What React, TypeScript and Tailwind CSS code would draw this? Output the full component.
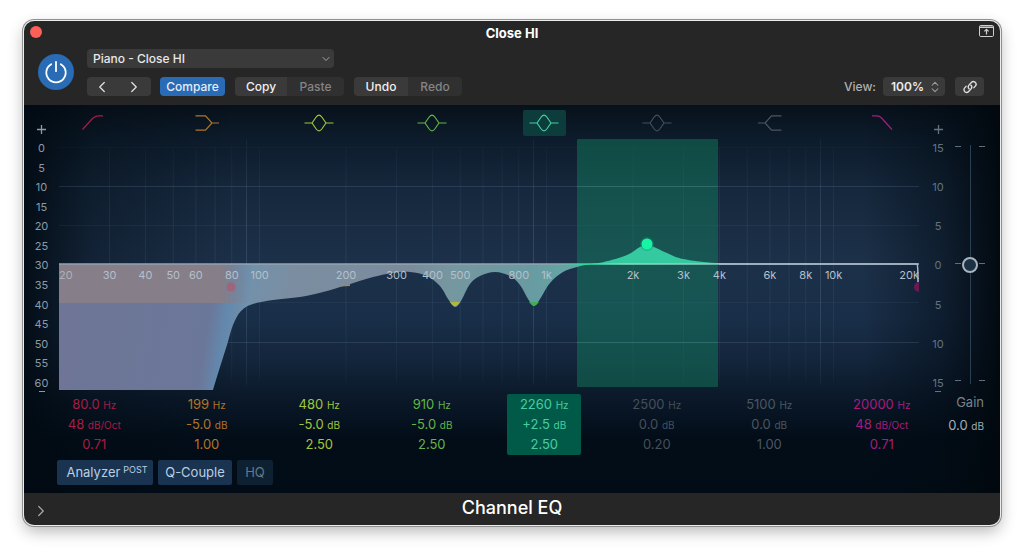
import { useState } from 'react'
import { ChevronDown, ChevronLeft, ChevronRight, ChevronsUpDown } from 'lucide-react'

type Shape = 'lowCut' | 'lowShelf' | 'bell' | 'highShelf' | 'highCut'

const shapes: Record<Shape, string> = {
  lowCut: 'M3.5 15.5 13.5 4.5Q16.5 1.8 19 1.8H24',
  lowShelf: 'M3.5 1.8H13.5L20 9 13.5 16.2H3.5M20 9H27',
  bell: 'M.5 9H8L12.2 3Q15 -.6 17.8 3L22 9H29.5M8 9 12.2 15Q15 18.6 17.8 15L22 9',
  highShelf: 'M27.5 1.8H17.5L11 9 17.5 16.2H27.5M11 9H4',
  highCut: 'M5 1.8H10Q12.5 1.8 14.5 4L25 15.5',
}

const bands = [
  { name: 'Low Cut', shape: 'lowCut', freq: '80.0', gain: '48', unit: 'dB/Oct', q: '0.71', color: 'text-[#a81c44]' },
  { name: 'Low Shelf', shape: 'lowShelf', freq: '199', gain: '-5.0', unit: 'dB', q: '1.00', color: 'text-[#b0752a]' },
  { name: 'Peak 1', shape: 'bell', freq: '480', gain: '-5.0', unit: 'dB', q: '2.50', color: 'text-[#a3c639]' },
  { name: 'Peak 2', shape: 'bell', freq: '910', gain: '-5.0', unit: 'dB', q: '2.50', color: 'text-[#63b548]' },
  { name: 'Peak 3', shape: 'bell', freq: '2260', gain: '+2.5', unit: 'dB', q: '2.50', color: 'text-[#45cf9f]' },
  { name: 'Peak 4', shape: 'bell', freq: '2500', gain: '0.0', unit: 'dB', q: '0.20', color: 'text-[#444f5c]' },
  { name: 'High Shelf', shape: 'highShelf', freq: '5100', gain: '0.0', unit: 'dB', q: '1.00', color: 'text-[#4b5661]' },
  { name: 'High Cut', shape: 'highCut', freq: '20000', gain: '48', unit: 'dB/Oct', q: '0.71', color: 'text-[#a51c7f]' },
] as const

const leftScale = [0, 5, 10, 15, 20, 25, 30, 35, 40, 45, 50, 55, 60]
const rightScale = [15, 10, 5, 0, 5, 10, 15]

const gridFreqs = [30, 40, 50, 60, 70, 80, 100, 200, 300, 400, 500, 600, 700, 800, 1000, 2000, 3000, 4000, 5000, 6000, 7000, 8000, 10000]
const decadeFreqs = [90, 900, 9000]
const labels = [
  [30, '30'], [40, '40'], [50, '50'], [60, '60'], [80, '80'], [100, '100'], [200, '200'], [300, '300'],
  [400, '400'], [500, '500'], [800, '800'], [1000, '1k'], [2000, '2k'], [3000, '3k'], [4000, '4k'],
  [6000, '6k'], [8000, '8k'], [10000, '10k'],
] as const

const curve = [
  [154, 251], [161, 228], [168, 206], [174, 186], [182, 172], [194, 165], [214, 161], [241, 158], [264, 153],
  [288, 146], [314, 138], [334, 134], [351, 133], [368, 137], [381, 147], [389, 160], [396, 168], [402, 162],
  [411, 145], [421, 137], [436, 133], [451, 137], [461, 146], [469, 160], [475, 167], [481, 160], [491, 144],
  [504, 133], [518, 128], [532, 125], [545, 123], [568, 116], [581, 108], [588, 106], [595, 108], [608, 114],
  [624, 120], [658, 124], [720, 125], [858, 125],
]

const freqX = (f: number) => Math.log10(f / 20) * 287

// Catmull-Rom spline through the points
function smooth(pts: number[][]) {
  let d = `${pts[0][0]} ${pts[0][1]}`
  for (let i = 0; i < pts.length - 1; i++) {
    const a = pts[i - 1] ?? pts[i]
    const b = pts[i]
    const c = pts[i + 1]
    const e = pts[i + 2] ?? c
    d += `C${b[0] + (c[0] - a[0]) / 6} ${b[1] + (c[1] - a[1]) / 6} ${c[0] - (e[0] - b[0]) / 6} ${c[1] - (e[1] - b[1]) / 6} ${c[0]} ${c[1]}`
  }
  return d
}

const segment = 'h-[19px] flex items-center justify-center'
const unit = 'text-[10px] leading-none'

function Header() {
  return (
    <header className="bg-[#262626] pb-[9px]">
      <div className="relative flex h-7 items-start justify-between px-1.5 pt-1">
        <button aria-label="Close" className="mt-px h-3 w-3 rounded-full bg-[#fe5f57]" />
        <h1 className="absolute inset-x-8 top-1 text-center text-[13px] leading-4 font-bold text-white">Close HI</h1>
        <button aria-label="Expand window" className="text-[#cfcfcf]">
          <svg width="15" height="12" viewBox="0 0 15 12" fill="none" stroke="currentColor">
            <rect x=".5" y=".5" width="14" height="11" rx="1.2" />
            <path d="M.5 2.2h14" strokeWidth="1.4" />
            <path d="M7.5 9.5v-5M5.4 6.4l2.1-2.1 2.1 2.1" strokeWidth="1.2" />
          </svg>
        </button>
      </div>

      <div className="flex items-end pr-4 pl-3.5">
        <button aria-label="Power" className="mb-1.5 flex h-9 w-9 items-center justify-center rounded-full bg-[#2a6bb5] text-white">
          <svg width="24" height="24" viewBox="0 0 24 24" fill="none" stroke="currentColor" strokeWidth="1.8" strokeLinecap="round">
            <path d="M12 1.8v9.4" />
            <path d="M7.2 4.2a9.7 9.7 0 1 0 9.6 0" />
          </svg>
        </button>

        <div className="ml-[13px] flex flex-col gap-[9px]">
          <div className="relative w-[247px]">
            <select aria-label="Preset" className="block h-[19px] w-full appearance-none rounded bg-[#3a3a3a] pr-6 pl-1.5 text-xs font-medium text-[#e8e8e8]">
              <option>Piano - Close HI</option>
            </select>
            <ChevronDown className="pointer-events-none absolute top-1 right-0.5 h-3 w-3 text-[#a5a5a5]" />
          </div>

          <div className="flex text-xs font-medium">
            <div className="flex w-16 overflow-hidden rounded bg-[#3a3a3a] text-[#e0e0e0]">
              <button aria-label="Previous preset" className={`${segment} w-[30px]`}>
                <ChevronLeft className="h-[18px] w-[18px]" strokeWidth={1.7} />
              </button>
              <button aria-label="Next preset" className={`${segment} flex-1`}>
                <ChevronRight className="h-[18px] w-[18px]" strokeWidth={1.7} />
              </button>
            </div>
            <button className={`${segment} ml-[9px] w-[65px] rounded bg-[#2a6bb5] text-[#e6eef8]`}>Compare</button>
            <div className="ml-2.5 flex overflow-hidden rounded">
              <button className={`${segment} w-[52px] bg-[#3a3a3a] text-[#f0f0f0]`}>Copy</button>
              <button className={`${segment} w-[57px] bg-[#303030] text-[#858585]`}>Paste</button>
            </div>
            <div className="ml-2.5 flex overflow-hidden rounded">
              <button className={`${segment} w-[54px] bg-[#3a3a3a] text-[#f0f0f0]`}>Undo</button>
              <button className={`${segment} w-[54px] bg-[#303030] text-[#858585]`}>Redo</button>
            </div>
          </div>
        </div>

        <div className="ml-auto flex items-center text-xs">
          <label htmlFor="view" className="mr-[7px] font-medium text-[#b0b0b0]">View:</label>
          <div className="relative">
            <select id="view" className="block h-[19px] w-[62px] appearance-none rounded bg-[#3a3a3a] pl-2 text-xs font-semibold text-[#ececec]">
              <option>100%</option>
            </select>
            <ChevronsUpDown className="pointer-events-none absolute top-[3px] right-[3px] h-3.5 w-3.5 text-[#a0a0a0]" strokeWidth={1.8} />
          </div>
          <button aria-label="Link" className={`${segment} ml-2.5 w-[29px] rounded bg-[#3a3a3a] text-[#dcdcdc]`}>
            <svg width="14" height="14" viewBox="0 0 24 24" fill="none" stroke="currentColor" strokeWidth="2.4" strokeLinecap="round">
              <path d="M10.5 15.2a4.6 4.6 0 0 1-.6-6l4.4-4.9a4.6 4.6 0 0 1 6.8 6.2l-2.4 2.6" />
              <path d="M13.5 8.8a4.6 4.6 0 0 1 .6 6l-4.4 4.9a4.6 4.6 0 0 1-6.8-6.2l2.4-2.6" />
            </svg>
          </button>
        </div>
      </div>
    </header>
  )
}

function Scale({ values, className }: { values: number[]; className: string }) {
  return (
    <div className={`-mt-[19px] -mb-0.5 flex shrink-0 flex-col items-center text-[11px] leading-[19px] ${className}`}>
      <svg width="9" height="19" viewBox="0 0 9 19" stroke="currentColor" strokeWidth="1.3">
        <path d="M0 9.5h9M4.5 5v9" />
      </svg>
      <div className="flex flex-1 flex-col items-center justify-between">
        {values.map((v, i) => (
          <span key={i}>{v}</span>
        ))}
      </div>
      <span className="-mt-0.5 h-px w-1.5 bg-current" />
    </div>
  )
}

function Plot() {
  const line = smooth(curve)
  return (
    <svg viewBox="0 0 860 251" className="h-auto min-w-0 flex-1" role="img" aria-label="Equalizer curve">
      <defs>
        <linearGradient id="area" gradientUnits="userSpaceOnUse" x1="0" y1="0" x2="860" y2="0" gradientTransform="skewX(-8.5)">
          <stop offset="0" stopColor="#6f7596" />
          <stop offset=".205" stopColor="#6b7799" />
          <stop offset=".225" stopColor="#6388ad" />
          <stop offset=".25" stopColor="#7391aa" />
          <stop offset=".29" stopColor="#7a8ea1" />
          <stop offset=".43" stopColor="#7b8b9c" />
          <stop offset=".48" stopColor="#7597a0" />
          <stop offset=".57" stopColor="#699aa2" />
          <stop offset=".62" stopColor="#62a6a4" />
          <stop offset=".65" stopColor="#35c9a0" />
          <stop offset=".77" stopColor="#35c9a0" />
          <stop offset=".82" stopColor="#8fb9bb" />
        </linearGradient>
        <linearGradient id="cut" x1="0" x2="1">
          <stop offset=".85" stopColor="#867e88" />
          <stop offset="1" stopColor="#867e88" stopOpacity="0" />
        </linearGradient>
        <linearGradient id="stroke" gradientUnits="userSpaceOnUse" x1="0" y1="0" x2="860" y2="0">
          <stop offset=".58" stopColor="#93a3af" />
          <stop offset=".61" stopColor="#22e09a" />
          <stop offset=".66" stopColor="#7fe3c4" />
          <stop offset=".8" stopColor="#8fc4c2" />
          <stop offset="1" stopColor="#a3b2c0" />
        </linearGradient>
        <linearGradient id="fade" x1="0" y1="0" x2="0" y2="1">
          <stop offset="0" stopColor="#fff" stopOpacity=".3" />
          <stop offset=".3" stopColor="#fff" />
          <stop offset=".7" stopColor="#fff" />
          <stop offset="1" stopColor="#fff" stopOpacity=".3" />
        </linearGradient>
        <mask id="gridMask">
          <rect width="860" height="251" fill="url(#fade)" />
        </mask>
      </defs>

      <g mask="url(#gridMask)" fill="none">
        {gridFreqs.map(f => (
          <path key={f} d={`M${freqX(f)} 8V243`} stroke="#6f9bb5" strokeOpacity=".13" />
        ))}
        {decadeFreqs.map(f => (
          <path key={f} d={`M${freqX(f)} 0V246`} stroke="#7fa5bb" strokeOpacity=".22" />
        ))}
        <path d="M0 8.5H860M0 86.5H860M0 163.5H860" stroke="#7fa5bb" strokeOpacity=".08" />
        <path d="M0 47.5H860M0 203.5H860" stroke="#7fa5bb" strokeOpacity=".25" />
      </g>

      <rect x="518" y="0" width="141" height="248" rx="1" fill="#148260" fillOpacity=".46" />
      <path d="M518 47.5h141M518 203.5h141" stroke="#7fc5bb" strokeOpacity=".15" />

      <path d={`M0 125V251L${line}Z`} fill="url(#area)" />
      <rect y="125" width="190" height="39" fill="url(#cut)" />
      <path d="M391 163q5 8 10 0z" fill="#b3b83c" />
      <path d="M470 163q5 7 10 0z" fill="#3fae55" />
      <path d="M281 147.5l10-2.5v2z" fill="#b88a4a" />
      <path d="M0 125H860" stroke="url(#stroke)" strokeWidth="1.5" />
      <path d="M660 125H858Q859 126 859 143" fill="none" stroke="#a9b6c2" strokeWidth="1.6" />
      <circle cx="172" cy="148" r="4.5" fill="#c4475f" fillOpacity=".5" />
      <circle cx="860" cy="148" r="5" fill="#8e1560" fillOpacity=".7" />
      <circle cx="588" cy="105" r="7" fill="#0d9a6a" fillOpacity=".4" />
      <circle cx="588" cy="105" r="5.5" fill="#16f5a5" />

      <g className="text-[11px]" fill="#b4c0cc" textAnchor="middle">
        <text x="0" y="140" textAnchor="start" fillOpacity=".8">20</text>
        {labels.map(([f, t]) => (
          <text key={f} x={freqX(f)} y="140">{t}</text>
        ))}
        <text x="860" y="140" textAnchor="end">20k</text>
      </g>
    </svg>
  )
}

function GainSlider() {
  const [gain, setGain] = useState(0)
  return (
    <div className="relative flex w-[26px] shrink-0 justify-center pt-1 pb-1.5 text-[#5f6e7a]">
      <div className="flex flex-col justify-between py-[3px]">
        {[0, 1, 2].map(i => (
          <span key={i} className="flex w-[30px] justify-between">
            <span className="h-px w-1.5 bg-current" />
            <span className="h-px w-1.5 bg-current" />
          </span>
        ))}
      </div>
      <div className="absolute inset-y-1.5 left-1/2 w-px bg-[#2c3f50]" />
      <input
        id="gain"
        type="range"
        min={-15}
        max={15}
        step={0.5}
        value={gain}
        onChange={e => setGain(Number(e.target.value))}
        className="absolute inset-0 m-auto h-full w-4 appearance-none bg-transparent [direction:rtl] [writing-mode:vertical-lr] [&::-webkit-slider-thumb]:h-4 [&::-webkit-slider-thumb]:w-4 [&::-webkit-slider-thumb]:appearance-none [&::-webkit-slider-thumb]:rounded-full [&::-webkit-slider-thumb]:border-2 [&::-webkit-slider-thumb]:border-[#a7b3bd] [&::-webkit-slider-thumb]:bg-[#1c3144]"
      />
    </div>
  )
}

export default function App() {
  const [active, setActive] = useState(4)

  return (
    <main className="bg-white px-6 pt-[21px] pb-[29px] font-[Inter,sans-serif]">
      <div className="overflow-hidden rounded-[10px] shadow-[0_0_0_1px_#ececec,0_0_0_2px_#8f8f8f,0_6px_16px_rgba(0,0,0,0.3)]">
        <Header />

        <section className="bg-[linear-gradient(90deg,rgba(1,10,18,0.9),rgba(1,10,18,0.35)_7%,transparent_22%,transparent_86%,rgba(1,10,18,0.45)_94%,rgba(1,8,14,0.95)),linear-gradient(180deg,#07111b,#0d1c2c_9%,#16283d_22%,#1c3049_40%,#192e48_55%,#13253b_66%,#0b192a_75%,#020d18_86%,#010c16)]">
          <div className="grid grid-cols-8 justify-items-center pt-[5px] pr-[62px] pb-[3px] pl-3.5">
            {bands.map((b, i) => (
              <button
                key={b.name}
                aria-label={b.name}
                aria-pressed={i === active}
                onClick={() => setActive(i)}
                className={`flex h-[26px] w-[43px] items-center justify-center rounded-xs ${b.color} ${i === active ? 'bg-[#0c3d3c]' : ''}`}
              >
                <svg width="30" height="18" viewBox="0 0 30 18" fill="none" stroke="currentColor" strokeWidth="1.2">
                  <path d={shapes[b.shape]} />
                </svg>
              </button>
            ))}
          </div>

          <div className="flex pr-[17px]">
            <Scale values={leftScale} className="w-[35px] text-[#8e9ba6]" />
            <Plot />
            <Scale values={rightScale} className="w-[38px] text-[#637481]" />
            <GainSlider />
          </div>

          <div className="flex pt-1 pl-3.5">
            <div className="grid flex-1 grid-cols-8 justify-items-center">
              {bands.map((b, i) => (
                <div
                  key={b.name}
                  className={`flex w-[74px] flex-col items-center rounded-xs pb-px text-[13px] leading-5 whitespace-nowrap ${b.color} ${i === active ? 'bg-[#015a48]' : ''}`}
                >
                  <span>{b.freq} <small className={unit}>Hz</small></span>
                  <span>{b.gain} <small className={unit}>{b.unit}</small></span>
                  <span>{b.q}</span>
                </div>
              ))}
            </div>
            <div className="-mt-1 flex w-[62px] flex-col items-end pr-4 text-[13px] whitespace-nowrap">
              <label htmlFor="gain" className="leading-6 text-[#77838d]">Gain</label>
              <span className="leading-[22px] text-[#a3adb6]">0.0 <small className={unit}>dB</small></span>
            </div>
          </div>

          <div className="flex gap-[5px] pt-[5px] pb-2 pl-[33px] text-[13px] leading-[25px]">
            <button className="flex w-24 justify-center gap-[3px] rounded-xs bg-[#1a3350] pl-1 text-[#b9cfe2]">
              Analyzer <span className="text-[9px] leading-5">POST</span>
            </button>
            <button className="w-[74px] rounded-xs bg-[#1a3350] text-[#b9cfe2]">Q-Couple</button>
            <button className="w-9 rounded-xs bg-[#0d2133] text-[#637a8c]">HQ</button>
          </div>
        </section>

        <footer className="relative flex h-8 items-center bg-[#262626]">
          <button aria-label="Show more" className="ml-2 pt-1 text-[#a8a8a8]">
            <ChevronRight className="h-[18px] w-[18px]" strokeWidth={1.6} />
          </button>
          <h2 className="pointer-events-none absolute inset-x-0 top-0 text-center text-[18px] leading-[30px] font-medium text-white">Channel EQ</h2>
        </footer>
      </div>
    </main>
  )
}
